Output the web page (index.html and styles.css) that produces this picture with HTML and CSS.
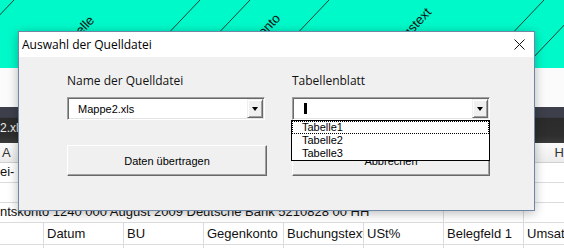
FILE: index.html
```html
<!DOCTYPE html>
<html lang="de">
<head>
    <meta charset="UTF-8">
    <title>Auswahl der Quelldatei</title>
    <link rel="stylesheet" href="styles.css">
</head>
<body>
<div class="sheet">
    <div class="kopf">
        <svg width="564" height="68" viewBox="0 0 564 68">
            <g stroke="#0d2c26" stroke-width="0.9">
                <line x1="14" y1="0" x2="-50.6" y2="68"/>
                <line x1="200" y1="0" x2="135.4" y2="68"/>
                <line x1="250" y1="0" x2="185.4" y2="68"/>
                <line x1="329" y1="0" x2="264.4" y2="68"/>
                <line x1="544" y1="0" x2="479.4" y2="68"/>
                <line x1="588" y1="0" x2="523.4" y2="68"/>
            </g>
            <g class="schraeg">
                <text x="95" y="21" transform="rotate(-46.5 95 21)">Kostenstelle</text>
                <text x="281" y="19" transform="rotate(-46.5 281 19)">Gegenkonto</text>
                <text x="432" y="13" transform="rotate(-46.5 432 13)">Buchungstext</text>
            </g>
        </svg>
    </div>
    <div class="formel"></div>
    <div class="fenster"><span>2.xls</span></div>
    <div class="spalten"><span>A</span><span>H</span></div>
    <div class="zeile">
        <div class="zelle erste">ei-</div>
        <div class="zelle"></div><div class="zelle"></div><div class="zelle"></div>
        <div class="zelle"></div><div class="zelle"></div><div class="zelle"></div><div class="zelle"></div>
    </div>
    <div class="zeile">
        <div class="zelle erste"></div>
        <div class="zelle"></div><div class="zelle"></div><div class="zelle"></div>
        <div class="zelle"></div><div class="zelle"></div><div class="zelle"></div><div class="zelle"></div>
    </div>
    <div class="zeile unten">
        <div class="zelle lang">ntskonto 1240 000 August 2009 Deutsche Bank 5210828 00 HH</div>
        <div class="zelle"></div><div class="zelle"></div>
    </div>
    <div class="zeile titel">
        <div class="zelle erste"></div>
        <div class="zelle">Datum</div>
        <div class="zelle">BU</div>
        <div class="zelle">Gegenkonto</div>
        <div class="zelle">Buchungstext</div>
        <div class="zelle">USt%</div>
        <div class="zelle">Belegfeld 1</div>
        <div class="zelle">Umsatz</div>
    </div>
    <div class="zeile">
        <div class="zelle erste"></div>
        <div class="zelle"></div><div class="zelle"></div><div class="zelle"></div>
        <div class="zelle"></div><div class="zelle"></div><div class="zelle"></div><div class="zelle"></div>
    </div>
</div>

<div class="dialog">
    <div class="dlg-kopf">
        <span>Auswahl der Quelldatei</span>
        <svg class="zu" width="11" height="11" viewBox="0 0 11 11">
            <path d="M0.5 0.5 L10.5 10.5 M10.5 0.5 L0.5 10.5" stroke="#111" stroke-width="1"/>
        </svg>
    </div>
    <div class="dlg-inhalt">
        <div class="label">Name der Quelldatei</div>
        <div class="label">Tabellenblatt</div>

        <div class="combo">
            <span class="wert">Mappe2.xls</span>
            <span class="pfeil"></span>
        </div>
        <div class="combo">
            <span class="cursor"></span>
            <span class="pfeil"></span>
            <div class="liste">
                <div class="eintrag fokus">Tabelle1</div>
                <div class="eintrag">Tabelle2</div>
                <div class="eintrag">Tabelle3</div>
            </div>
        </div>

        <div class="knopf">Daten übertragen</div>
        <div class="knopf">Abbrechen</div>
    </div>
</div>
</body>
</html>
```

FILE: styles.css
```css
*{
    box-sizing: border-box;
}
html,body{
    margin:0;
    padding:0;
}
body{
    width:564px;
    height:248px;
    overflow: hidden;
    position: relative;
    background: #fff;
    font-family: "Liberation Sans", Arial, sans-serif;
}

/* excel im hintergrund */
.sheet{
    width:564px;
    height:248px;
    overflow: hidden;
}
.kopf{
    height:68px;
    background: #00f9c9;
}
.kopf svg{
    display: block;
}
.schraeg text{
    font-family: "Liberation Sans", Arial, sans-serif;
    font-size: 13px;
    fill: #111;
    text-anchor: end;
}
.formel{
    height:39px;
    background: #fbfbfb;
}
.fenster{
    height:36px;
    background: linear-gradient(#3d404b 0, #3d404b 28%, #2b2b2b 32%, #2e2e2e 80%, #3a3a3a 100%);
    color: #ececec;
    font-size: 12px;
    display: flex;
    align-items: flex-end;
    padding-bottom: 8px;
}
.spalten{
    height:20px;
    background: linear-gradient(#fbfbfb, #ececec);
    border-bottom: 1px solid #d0d0d0;
    display: flex;
    justify-content: space-between;
    align-items: center;
    padding-left: 2px;
    padding-right: 0;
    font-size: 13px;
    color: #333;
}
.zeile{
    height:20px;
    display: flex;
    border-bottom: 1px solid #dadcdd;
    font-size: 13px;
    color: #111;
}
.zeile.titel{
    height:22px;
}
.zelle{
    flex: none;
    width:80px;
    border-right: 1px solid #dadcdd;
    white-space: nowrap;
    overflow: hidden;
    padding-left: 3px;
    display: flex;
    align-items: flex-end;
    padding-bottom: 3px;
}
.zelle.erste{
    width:44px;
    padding-left: 0;
}
.zelle.lang{
    width:444px;
    padding-left: 0;
}

/* dialog */
.dialog{
    position: absolute;
    left:18px;
    top:31px;
    width:517px;
    height:180px;
    background: #f0f0f0;
    border: 1px solid #6f87a6;
    box-shadow: 0 2px 10px rgba(0,0,0,0.28);
}
.dlg-kopf{
    height:25px;
    background: #fff;
    display: flex;
    justify-content: space-between;
    align-items: center;
    padding-left: 3px;
    padding-right: 9px;
    font-family: "Open Sans", "Liberation Sans", sans-serif;
    font-size: 12px;
    color: #000;
}
.zu{
    display: block;
}
.dlg-inhalt{
    display: grid;
    grid-template-columns: 200px 198px;
    column-gap: 25px;
    padding: 16px 0 0 48px;
}
.label{
    font-family: "Open Sans", "Liberation Sans", sans-serif;
    font-size: 12px;
    line-height: 15px;
    color: #111;
}
.combo{
    position: relative;
    width:198px;
    height:23px;
    margin-top: 9px;
    background: #fff;
    border-top: 1px solid #a0a0a0;
    border-left: 1px solid #a0a0a0;
    border-right: 1px solid #fff;
    border-bottom: 1px solid #fff;
    box-shadow: inset 1px 1px 0 #696969, inset -1px -1px 0 #e3e3e3;
    display: flex;
    align-items: center;
    padding-left: 10px;
    font-size: 11px;
    color: #000;
}
.cursor{
    width:3px;
    height:11px;
    background: #000;
    margin-left: 1px;
}
.pfeil{
    position: absolute;
    top:1px;
    right:1px;
    width:16px;
    height:19px;
    background: #f0f0f0;
    border-top: 1px solid #f0f0f0;
    border-left: 1px solid #f0f0f0;
    border-right: 1px solid #696969;
    border-bottom: 1px solid #696969;
    box-shadow: inset 1px 1px 0 #fff, inset -1px -1px 0 #a0a0a0;
}
.pfeil:after{
    content: '';
    position: absolute;
    left:4px;
    top:7px;
    border-left: 3.5px solid transparent;
    border-right: 3.5px solid transparent;
    border-top: 4px solid #000;
}
.liste{
    position: absolute;
    left:-2px;
    top:22px;
    width:199px;
    background: #fff;
    border: 1px solid #000;
    z-index: 2;
}
.eintrag{
    height:13px;
    line-height: 13px;
    padding-left: 10px;
    font-size: 11px;
    color: #000;
}
.fokus{
    outline: 1px dotted #000;
    outline-offset: -1px;
}
.knopf{
    height:31px;
    margin-top: 25px;
    background: #f0f0f0;
    border-top: 1px solid #fff;
    border-left: 1px solid #fff;
    border-right: 1px solid #696969;
    border-bottom: 1px solid #696969;
    box-shadow: inset -1px -1px 0 #a0a0a0;
    display: flex;
    align-items: center;
    justify-content: center;
    font-size: 11px;
    color: #000;
}
```
